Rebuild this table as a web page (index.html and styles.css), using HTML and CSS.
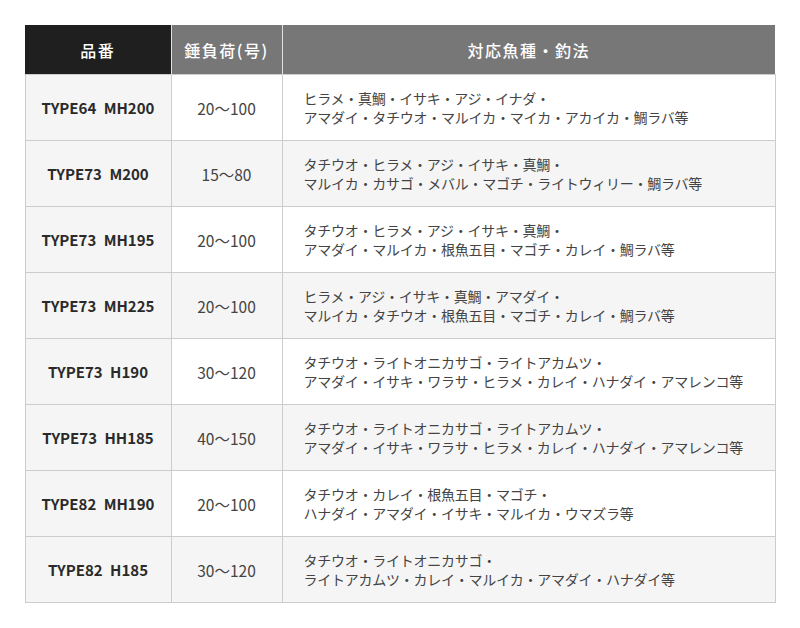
FILE: index.html
```html
<!DOCTYPE html>
<html lang="ja">
<head>
<meta charset="utf-8">
<link rel="stylesheet" href="styles.css">
</head>
<body>
<table class="spec">
  <colgroup>
    <col class="c1"><col class="c2"><col class="c3">
  </colgroup>
  <thead>
    <tr>
      <th class="h-model">品番</th>
      <th>錘負荷(号)</th>
      <th>対応魚種・釣法</th>
    </tr>
  </thead>
  <tbody>
    <tr><td class="model">TYPE64 MH200</td><td class="load">20～100</td><td class="fish">ヒラメ・真鯛・イサキ・アジ・イナダ・<br>アマダイ・タチウオ・マルイカ・マイカ・アカイカ・鯛ラバ等</td></tr>
    <tr><td class="model">TYPE73 M200</td><td class="load">15～80</td><td class="fish">タチウオ・ヒラメ・アジ・イサキ・真鯛・<br>マルイカ・カサゴ・メバル・マゴチ・ライトウィリー・鯛ラバ等</td></tr>
    <tr><td class="model">TYPE73 MH195</td><td class="load">20～100</td><td class="fish">タチウオ・ヒラメ・アジ・イサキ・真鯛・<br>アマダイ・マルイカ・根魚五目・マゴチ・カレイ・鯛ラバ等</td></tr>
    <tr><td class="model">TYPE73 MH225</td><td class="load">20～100</td><td class="fish">ヒラメ・アジ・イサキ・真鯛・アマダイ・<br>マルイカ・タチウオ・根魚五目・マゴチ・カレイ・鯛ラバ等</td></tr>
    <tr><td class="model">TYPE73 H190</td><td class="load">30～120</td><td class="fish">タチウオ・ライトオニカサゴ・ライトアカムツ・<br>アマダイ・イサキ・ワラサ・ヒラメ・カレイ・ハナダイ・アマレンコ等</td></tr>
    <tr><td class="model">TYPE73 HH185</td><td class="load">40～150</td><td class="fish">タチウオ・ライトオニカサゴ・ライトアカムツ・<br>アマダイ・イサキ・ワラサ・ヒラメ・カレイ・ハナダイ・アマレンコ等</td></tr>
    <tr><td class="model">TYPE82 MH190</td><td class="load">20～100</td><td class="fish">タチウオ・カレイ・根魚五目・マゴチ・<br>ハナダイ・アマダイ・イサキ・マルイカ・ウマズラ等</td></tr>
    <tr><td class="model">TYPE82 H185</td><td class="load">30～120</td><td class="fish">タチウオ・ライトオニカサゴ・<br>ライトアカムツ・カレイ・マルイカ・アマダイ・ハナダイ等</td></tr>
  </tbody>
</table>
</body>
</html>
```
FILE: styles.css
```css
html, body {
  margin: 0;
  padding: 0;
  background: #ffffff;
}
body {
  padding-top: 25px;
  font-family: "Noto Sans CJK JP", "Noto Sans", sans-serif;
  color: #333333;
}
.spec {
  width: 750px;
  margin: 0 auto;
  border-collapse: collapse;
  table-layout: fixed;
}
.c1 { width: 146px; }
.c2 { width: 111px; }
.c3 { width: 493px; }
.spec th {
  height: 49px;
  padding: 0;
  background: #777777;
  color: #ffffff;
  font-size: 16px;
  font-weight: 500;
  text-align: center;
  border-left: 1px solid #e0e0e0;
  border-right: 1px solid #e0e0e0;
  letter-spacing: 1.5px;
}
.spec th.h-model {
  background: #1f1f1f;
  border-left: none;
}
.spec th:last-child {
  border-right: none;
}
.spec td {
  height: 65px;
  padding: 0;
  border: 1px solid #cccccc;
  font-size: 14px;
  vertical-align: middle;
  background: #ffffff;
}
.spec tbody tr:nth-child(even) td {
  background: #f5f5f5;
}
.spec td.model {
  background: #f5f5f5;
  font-size: 15px;
  font-weight: 700;
  text-align: center;
  color: #2a2a2a;
  word-spacing: 4px;
}
.spec td.load {
  font-size: 15.5px;
  text-align: center;
  color: #444444;
}
.spec td.fish {
  padding-left: 21px;
  line-height: 18.5px;
  letter-spacing: -0.25px;
  color: #444444;
}
```
